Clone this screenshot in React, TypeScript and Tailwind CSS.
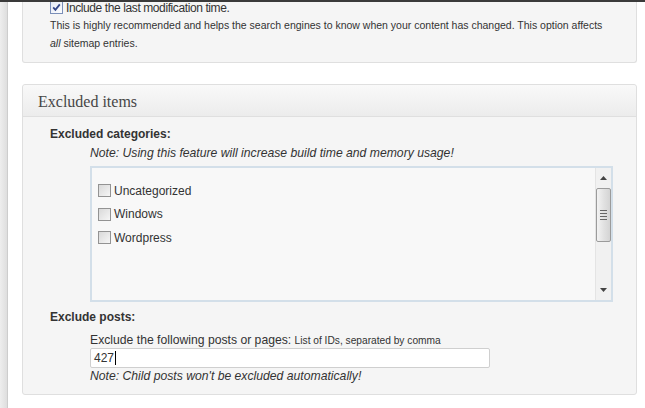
import React from "react"

const sans = { fontFamily: '"Liberation Sans", Arial, sans-serif' }

function Box({ checked = false }: { checked?: boolean }) {
  return (
    <span
      className={`inline-flex items-center justify-center w-[13px] h-[13px] shrink-0 border ${
        checked ? "border-[#7b8fb8] bg-gradient-to-br from-[#e3e9f5] to-[#fdfdfd]" : "border-[#939393] bg-gradient-to-br from-[#d9d9d9] to-[#f6f6f6]"
      }`}
    >
      {checked && (
        <svg width="9" height="9" viewBox="0 0 9 9">
          <path d="M1.2 4.4 L3.4 6.8 L7.8 1.4" fill="none" stroke="#33468a" strokeWidth="1.8" />
        </svg>
      )}
    </span>
  )
}

function Scrollbar() {
  return (
    <div className="w-[16px] self-stretch flex flex-col items-center bg-[#f1f1f1] border-l border-[#e4e4e4]">
      <div className="h-[20px] flex items-center justify-center">
        <svg width="7" height="4" viewBox="0 0 7 4">
          <path d="M0 4 L3.5 0 L7 4 Z" fill="#444" />
        </svg>
      </div>
      <div className="w-[15px] h-[54px] rounded-[2px] border border-[#9b9b9b] bg-gradient-to-r from-[#f3f3f3] via-[#e2e2e2] to-[#d4d4d4] flex flex-col items-center justify-center gap-[2px]">
        <div className="w-[7px] h-px bg-[#666]" />
        <div className="w-[7px] h-px bg-[#666]" />
        <div className="w-[7px] h-px bg-[#666]" />
        <div className="w-[7px] h-px bg-[#666]" />
      </div>
      <div className="flex-1" />
      <div className="h-[20px] flex items-center justify-center">
        <svg width="7" height="4" viewBox="0 0 7 4">
          <path d="M0 0 L7 0 L3.5 4 Z" fill="#444" />
        </svg>
      </div>
    </div>
  )
}

export default function App() {
  const categories = ["Uncategorized", "Windows", "Wordpress"]

  return (
    <div className="relative w-[645px] h-[408px] overflow-hidden bg-white text-[#333]" style={sans}>
      <div className="absolute top-0 left-0 right-0 h-[2px] bg-[#3a3a3a]" />
      <div className="flex h-full">
        <div className="w-[8px] h-full bg-gradient-to-r from-[#eeeeee] to-[#dedede] border-r border-[#cdcdcd]" />
        <div className="flex-1 pl-[14px] pr-[8px]">
          {/* previous panel, cut off at the top */}
          <div className="bg-[#f5f5f5] border border-t-0 border-[#dfdfdf] rounded-b-[3px] pl-[27px] pr-[4px] pb-[10px]">
            <label className="flex items-center gap-[3px] h-[15px] text-[12px] tracking-[-0.4px]">
              <Box checked />
              Include the last modification time.
            </label>
            <p className="text-[10.5px] leading-[18px] mt-[1px] whitespace-nowrap">
              This is highly recommended and helps the search engines to know when your content has changed. This option affects
              <br />
              <i>all</i> sitemap entries.
            </p>
          </div>

          <div className="mt-[21px] bg-[#f5f5f5] border border-[#dfdfdf] rounded-[3px] h-[311px]">
            <div className="h-[32px] flex items-center pl-[15px] border-b border-[#dfdfdf] bg-gradient-to-b from-[#f9f9f9] to-[#ececec] rounded-t-[3px]">
              <h3
                className="text-[16px] text-[#464646] pt-[2px]"
                style={{ fontFamily: '"Liberation Serif", Georgia, serif' }}
              >
                Excluded items
              </h3>
            </div>
            <div className="pl-[27px] pr-[23px] pt-[10px]">
              <div className="text-[12px] font-bold leading-[14px]">Excluded categories:</div>
              <div className="pl-[40px]">
                <div className="mt-[5px] text-[12.2px] italic leading-[14px]">
                  Note: Using this feature will increase build time and memory usage!
                </div>
                <div className="mt-[6px] h-[136px] border-2 border-[#d3dfe9] bg-[#f8f8f8] flex">
                  <div className="flex-1 pt-[11px] pl-[6px]">
                    {categories.map((c) => (
                      <label key={c} className="flex items-center gap-[3px] h-[23.5px] text-[12px]">
                        <Box />
                        {c}
                      </label>
                    ))}
                  </div>
                  <Scrollbar />
                </div>
              </div>
              <div className="mt-[8px] text-[12px] font-bold leading-[14px]">Exclude posts:</div>
              <div className="pl-[40px]">
                <div className="mt-[9px] text-[12.2px] leading-[14px]">
                  Exclude the following posts or pages: <span className="text-[10.2px]">List of IDs, separated by comma</span>
                </div>
                <div className="mt-0 w-[400px] h-[20px] border border-[#cfcfcf] rounded-[2px] bg-white flex items-center pl-[3px] text-[12px]">
                  427
                  <span className="ml-px w-px h-[14px] bg-black" />
                </div>
                <div className="text-[12.2px] italic leading-[14px] mt-px">Note: Child posts won't be excluded automatically!</div>
              </div>
            </div>
          </div>
        </div>
      </div>
    </div>
  )
}
